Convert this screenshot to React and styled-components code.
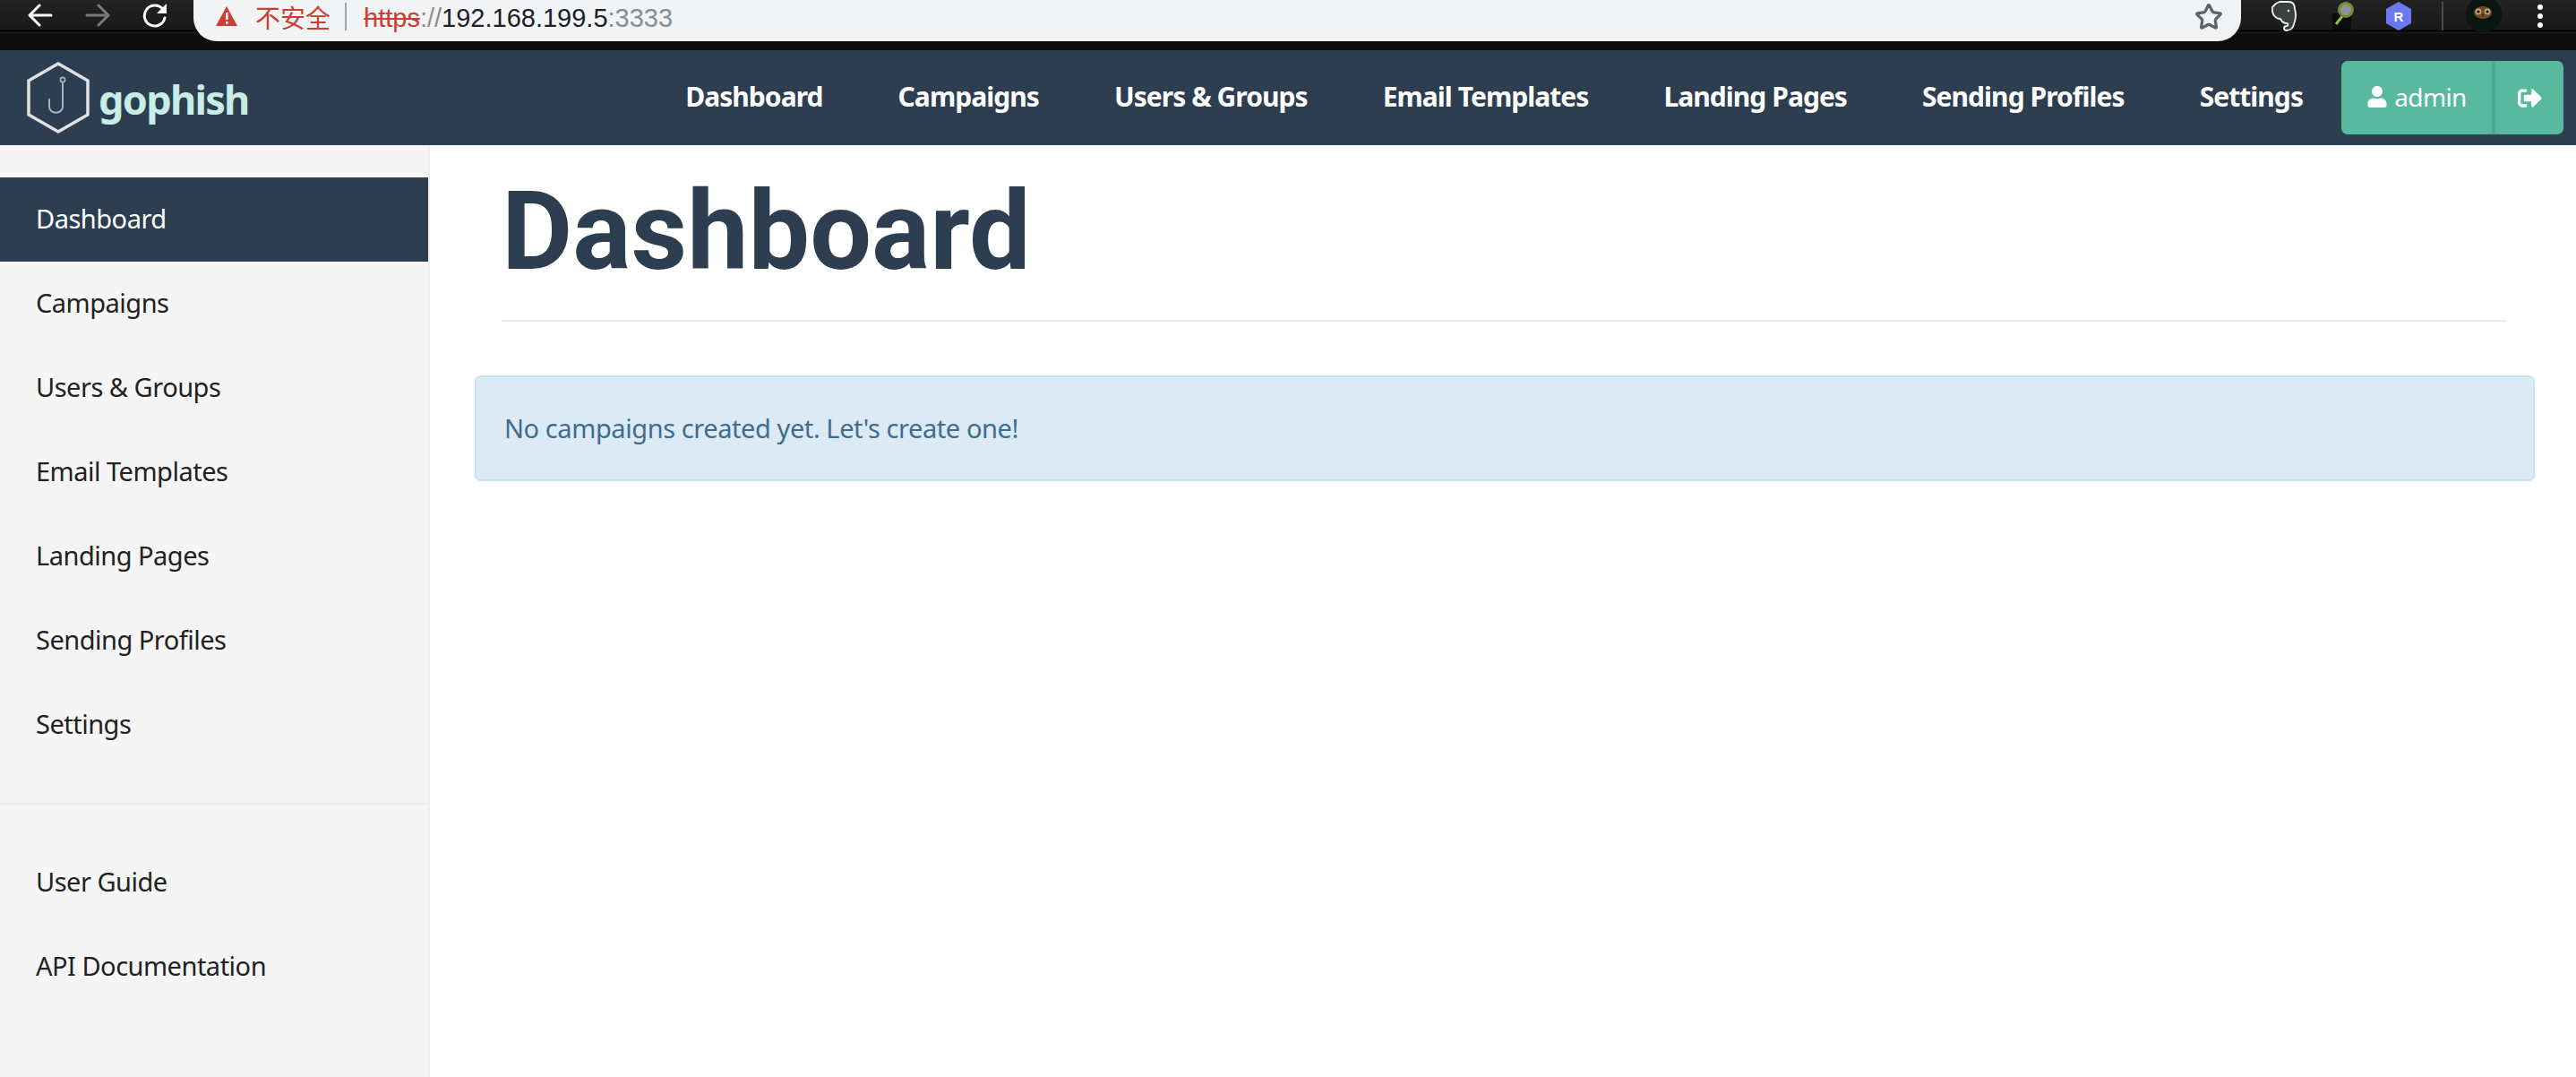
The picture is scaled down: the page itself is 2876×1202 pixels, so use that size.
import styled, { createGlobalStyle } from "styled-components";
import { Star } from "lucide-react";
import { FaUser, FaSignOutAlt } from "react-icons/fa";

const bodyFont = `"Noto Sans", "Open Sans", sans-serif`;

const GlobalStyle = createGlobalStyle`
  html, body {
    margin: 0;
    padding: 0;
    background: #fff;
  }
  * {
    box-sizing: border-box;
  }
`;

const Page = styled.div`
  width: 2876px;
  height: 1202px;
  display: flex;
  flex-direction: column;
  overflow: hidden;
  font-family: ${bodyFont};
`;

/* browser chrome */
const Chrome = styled.div`
  height: 56px;
  flex: none;
  display: flex;
  align-items: flex-start;
  background: #0e0e0e;
`;

const ChromeInner = styled.div`
  width: 100%;
  height: 46px;
  display: flex;
  align-items: flex-start;
  background: linear-gradient(#232323 0, #191919 33px, #000 34px, #000 35px, #1c1c1c 36px, #0e0e0e 38px);
`;

const NavButtons = styled.div`
  width: 216px;
  flex: none;
  height: 34px;
  display: flex;
  align-items: center;
  gap: 36px;
  padding-left: 31px;
`;

const ChromeIcon = styled.span`
  display: flex;
  color: ${(p) => p.$color || "#fff"};
`;

const AddressBar = styled.div`
  width: 2286px;
  height: 46px;
  flex: none;
  background: #f1f3f4;
  border-radius: 0 0 26px 26px;
  display: flex;
  align-items: flex-start;
  padding: 3px 20px 0 24px;
  font: 29px/34px "Liberation Sans", Arial, sans-serif;
  color: #202124;
`;

const WarnIconSlot = styled.span`
  display: flex;
  padding-top: 3px;
`;

const WarnText = styled.span`
  color: #c94033;
  margin-left: 19px;
  font-family: "Noto Sans CJK SC", sans-serif;
  font-size: 28px;
  line-height: 32px;
`;

const BarDivider = styled.span`
  width: 2px;
  height: 31px;
  margin: 0 19px 0 16px;
  background: #a0a2a5;
`;

const Scheme = styled.span`
  color: #c94033;
  text-decoration: line-through;
`;

const Dim = styled.span`
  color: #8b8d91;
`;

const StarSlot = styled.span`
  margin-left: auto;
  display: flex;
  color: #5f6368;
`;

const Extensions = styled.div`
  flex: 1;
  height: 36px;
  display: flex;
  align-items: center;
  padding-left: 33px;
`;

const ExtSlot = styled.span`
  display: flex;
  flex: none;
  margin-right: ${(p) => p.$gap}px;
`;

const ExtDivider = styled.span`
  width: 2px;
  height: 32px;
  flex: none;
  background: #4a4a4a;
  margin-right: 25px;
`;

const Dots = styled.span`
  display: flex;
  flex-direction: column;
  gap: 4px;
  i {
    width: 6px;
    height: 6px;
    border-radius: 50%;
    background: #fff;
  }
`;

/* gophish navbar */
const Navbar = styled.nav`
  height: 106px;
  flex: none;
  display: flex;
  align-items: center;
  background: #2c3e50;
  padding: 0 14px 0 30px;
`;

const Brand = styled.div`
  display: flex;
  align-items: center;
  gap: 10px;
`;

const BrandName = styled.span`
  color: #c8ece6;
  font-size: 45px;
  font-weight: 700;
  letter-spacing: -1.7px;
  line-height: 80px;
  padding-top: 3px;
`;

const NavList = styled.div`
  margin-left: auto;
  display: flex;
  gap: 84px;
  margin-right: 43px;
  padding-bottom: 3px;
`;

const NavLink = styled.a`
  color: #fff;
  font-size: 30px;
  font-weight: 700;
  letter-spacing: -0.95px;
  white-space: nowrap;
`;

const UserButtons = styled.div`
  width: 248px;
  height: 82px;
  display: flex;
  border-radius: 7px;
  overflow: hidden;
  background: #58b99e;
  color: #fff;
`;

const UserName = styled.div`
  width: 168px;
  display: flex;
  align-items: center;
  justify-content: center;
  gap: 7px;
  font-size: 28px;
  letter-spacing: -0.6px;
  padding-bottom: 2px;
`;

const LogoutButton = styled.div`
  flex: 1;
  display: flex;
  align-items: center;
  justify-content: center;
  border-left: 4px solid #4fa68e;
`;

/* body */
const Body = styled.div`
  flex: 1;
  display: flex;
  min-height: 0;
`;

const Sidebar = styled.aside`
  width: 480px;
  flex: none;
  background: #f5f5f5;
  border-right: 2px solid #eeeeee;
  padding-top: 36px;
`;

const SideLink = styled.a`
  display: flex;
  align-items: center;
  height: 94px;
  padding: 0 0 3px 40px;
  font-size: 29px;
  letter-spacing: -0.5px;
  color: ${(p) => (p.$active ? "#fff" : "#222")};
  background: ${(p) => (p.$active ? "#2c3e50" : "transparent")};
`;

const SideDivider = styled.div`
  height: 2px;
  margin: 40px 0;
  background: #eeeeee;
`;

const Main = styled.main`
  flex: 1;
  padding: 0 46px 0 50px;
`;

const PageHeader = styled.header`
  margin: 0 31px 60px 30px;
  border-bottom: 2px solid #eaeaee;
  padding: 28px 0 30px;
`;

const Title = styled.h1`
  margin: 0;
  color: #2c3e50;
  font-family: Roboto, "Liberation Sans", sans-serif;
  font-size: 122px;
  font-weight: 700;
  line-height: 137px;
  letter-spacing: 0;
`;

const Alert = styled.div`
  height: 118px;
  display: flex;
  align-items: center;
  padding: 0 0 1px 31px;
  background: #dceaf6;
  border: 2px solid #c4e6f0;
  border-radius: 7px;
  color: #3f6d8e;
  font-size: 29px;
  letter-spacing: -0.42px;
`;

const navItems = [
  "Dashboard",
  "Campaigns",
  "Users & Groups",
  "Email Templates",
  "Landing Pages",
  "Sending Profiles",
  "Settings",
];

function GophishLogo() {
  return (
    <svg width="70" height="80" viewBox="0 0 70 80" fill="none">
      <path d="M35 2 L68 21 V59 L35 78 L2 59 V21 Z" stroke="#dfe1e3" strokeWidth="3.5" />
      <circle cx="40" cy="20" r="2.6" stroke="#aab2ba" strokeWidth="1.6" />
      <path
        d="M40 23 V50 C40 59 25 59 25 50 V42"
        stroke="#aab2ba"
        strokeWidth="2"
        strokeLinecap="round"
      />
    </svg>
  );
}

function BackArrow() {
  return (
    <svg width="28" height="26" viewBox="0 0 28 26" fill="none" stroke="currentColor" strokeWidth="3" strokeLinecap="round" strokeLinejoin="round">
      <path d="M26 13 H3 M13 2 L2 13 L13 24" />
    </svg>
  );
}

function ForwardArrow() {
  return (
    <svg width="28" height="26" viewBox="0 0 28 26" fill="none" stroke="currentColor" strokeWidth="3" strokeLinecap="round" strokeLinejoin="round">
      <path d="M2 13 H25 M15 2 L26 13 L15 24" />
    </svg>
  );
}

function ReloadIcon() {
  return (
    <svg width="28" height="28" viewBox="0 0 28 28" fill="none">
      <path d="M22.5 7 A11.5 11.5 0 1 0 25 17" stroke="currentColor" strokeWidth="3" strokeLinecap="round" />
      <path d="M27 1 V12 H16 Z" fill="currentColor" />
    </svg>
  );
}

function ElephantIcon() {
  return (
    <svg width="30" height="34" viewBox="0 0 30 34">
      <path
        d="M6 3 L10 1 H20 C25 1 27 4 27 9 C29 15 28 21 26 26 C25 31 21 33 18 33 C14 33 14 28 18 28 C20 28 20 25 18 25 C13 25 12 22 11 20 C7 20 3 17 2 12 L2 7 Z"
        fill="#3a4040"
        stroke="#f0f1f0"
        strokeWidth="1.8"
        strokeLinejoin="round"
      />
      <circle cx="20" cy="11" r="1.2" fill="#f0f1f0" />
    </svg>
  );
}

function Magnifier() {
  return (
    <svg width="26" height="34" viewBox="0 0 26 34" fill="none">
      <rect x="1" y="14" width="21" height="19" rx="3" fill="#0b0b0b" />
      <path d="M13 16 L5 26" stroke="#8fbf4a" strokeWidth="3" />
      <circle cx="16" cy="10" r="7.5" fill="#8e9298" stroke="#6f8f2e" strokeWidth="3" />
    </svg>
  );
}

function RustIcon() {
  return (
    <svg width="30" height="34" viewBox="0 0 30 34">
      <path d="M15 1 L29 9 V25 L15 33 L1 25 V9 Z" fill="#6c78ee" />
      <text x="15" y="23" textAnchor="middle" fill="#fff" fontSize="15" fontWeight="700" fontFamily="Liberation Sans">
        R
      </text>
    </svg>
  );
}

function OwlAvatar() {
  return (
    <svg width="40" height="38" viewBox="0 0 40 38">
      <circle cx="20" cy="17" r="20" fill="#0a1612" />
      <ellipse cx="19" cy="15" rx="10" ry="7" fill="#6b4a26" />
      <circle cx="14" cy="14" r="3.4" fill="#c8a468" />
      <circle cx="24" cy="14" r="3.4" fill="#c8a468" />
      <circle cx="14" cy="14" r="1.6" fill="#0c0c0a" />
      <circle cx="24" cy="14" r="1.6" fill="#0c0c0a" />
      <path d="M18 17 h2 l-1 3 Z" fill="#2a1a0a" />
    </svg>
  );
}

function WarningIcon() {
  return (
    <svg width="26" height="24" viewBox="0 0 26 24">
      <path d="M13 1 L25 23 H1 Z" fill="#c94033" />
      <rect x="12" y="8" width="2.6" height="8" fill="#f1f3f4" />
      <rect x="12" y="18" width="2.6" height="2.6" fill="#f1f3f4" />
    </svg>
  );
}

export default function App() {
  return (
    <Page>
      <GlobalStyle />
      <Chrome>
        <ChromeInner>
          <NavButtons>
            <ChromeIcon>
              <BackArrow />
            </ChromeIcon>
            <ChromeIcon $color="#7a7a7a">
              <ForwardArrow />
            </ChromeIcon>
            <ChromeIcon>
              <ReloadIcon />
            </ChromeIcon>
          </NavButtons>
          <AddressBar>
            <WarnIconSlot>
              <WarningIcon />
            </WarnIconSlot>
            <WarnText>不安全</WarnText>
            <BarDivider />
            <span>
              <Scheme>https</Scheme>
              <Dim>://</Dim>192.168.199.5<Dim>:3333</Dim>
            </span>
            <StarSlot>
              <Star size={32} strokeWidth={2.4} />
            </StarSlot>
          </AddressBar>
          <Extensions>
            <ExtSlot $gap={38}>
              <ElephantIcon />
            </ExtSlot>
            <ExtSlot $gap={34}>
              <Magnifier />
            </ExtSlot>
            <ExtSlot $gap={33}>
              <RustIcon />
            </ExtSlot>
            <ExtDivider />
            <ExtSlot $gap={40}>
              <OwlAvatar />
            </ExtSlot>
            <Dots>
              <i />
              <i />
              <i />
            </Dots>
          </Extensions>
        </ChromeInner>
      </Chrome>
      <Navbar>
        <Brand>
          <GophishLogo />
          <BrandName>gophish</BrandName>
        </Brand>
        <NavList>
          {navItems.map((item) => (
            <NavLink key={item}>{item}</NavLink>
          ))}
        </NavList>
        <UserButtons>
          <UserName>
            <FaUser size={24} />
            admin
          </UserName>
          <LogoutButton>
            <FaSignOutAlt size={27} />
          </LogoutButton>
        </UserButtons>
      </Navbar>
      <Body>
        <Sidebar>
          {navItems.map((item, i) => (
            <SideLink key={item} $active={i === 0}>
              {item}
            </SideLink>
          ))}
          <SideDivider />
          <SideLink>User Guide</SideLink>
          <SideLink>API Documentation</SideLink>
        </Sidebar>
        <Main>
          <PageHeader>
            <Title>Dashboard</Title>
          </PageHeader>
          <Alert>No campaigns created yet. Let's create one!</Alert>
        </Main>
      </Body>
    </Page>
  );
}
